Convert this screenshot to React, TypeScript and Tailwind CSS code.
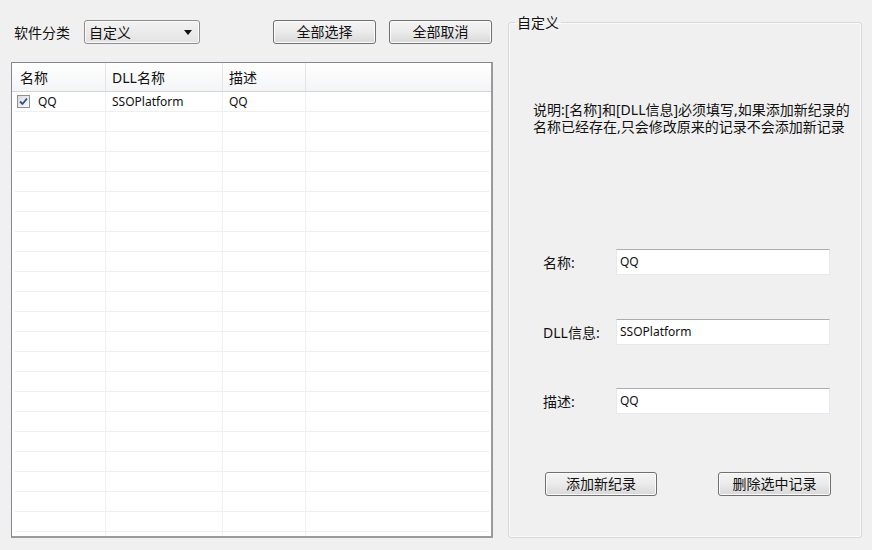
import React from "react";

const FONT = { fontFamily: '"Noto Sans", "Noto Sans CJK SC", sans-serif' };

function WinButton({ label, className = "" }: { label: string; className?: string }) {
  return (
    <button
      className={`h-[24px] rounded-[3px] border border-[#707070] bg-gradient-to-b from-[#f4f4f4] via-[#ebebeb] to-[#d8d8d8] text-[14px] leading-[20px] text-[#111] shadow-[inset_0_0_0_1px_#fcfcfc] ${className}`}
    >
      {label}
    </button>
  );
}

function CheckBox() {
  return (
    <div className="w-[13px] h-[13px] border border-[#8e8f8f] bg-gradient-to-br from-[#dcdcdc] to-[#fbfbfb] flex items-center justify-center">
      <svg width="9" height="9" viewBox="0 0 9 9">
        <path d="M1 4.5 L3.5 7 L8 1.5" fill="none" stroke="#2b4f8f" strokeWidth="1.8" />
      </svg>
    </div>
  );
}

function Field({ label, value, className = "" }: { label: string; value: string; className?: string }) {
  return (
    <div className={`flex items-center ${className}`}>
      <span className="w-[107px] pl-[34px] text-[14px] whitespace-nowrap">{label}</span>
      <div className="w-[214px] h-[26px] bg-white border border-[#e3e9ef] border-t-[#abadb3] flex items-center pl-[3px] text-[12px]">
        {value}
      </div>
    </div>
  );
}

export default function App() {
  const rows = Array.from({ length: 23 }, (_, i) => i);

  return (
    <div className="w-[872px] h-[550px] bg-[#f0f0f0] text-[#111] flex pl-[11px] pt-[14px] overflow-hidden" style={FONT}>
      {/* 左侧：分类 + 列表 */}
      <div className="w-[482px] flex flex-col pt-[6px]">
        <div className="h-[24px] flex items-center">
          <span className="ml-[3px] text-[14px]">软件分类</span>
          <div className="ml-[14px] w-[116px] h-[24px] rounded-[3px] border border-[#8e8e8e] bg-gradient-to-b from-[#f2f2f2] to-[#e3e3e3] flex items-center pl-[4px] pr-[7px] text-[14px] shadow-[inset_0_0_0_1px_#fafafa]">
            <span>自定义</span>
            <svg className="ml-auto" width="8" height="5" viewBox="0 0 8 5">
              <path d="M0 0 H8 L4 5 Z" fill="#111" />
            </svg>
          </div>
          <div className="ml-auto mr-[1px] flex gap-[13px]">
            <WinButton label="全部选择" className="w-[103px]" />
            <WinButton label="全部取消" className="w-[103px]" />
          </div>
        </div>

        <div className="mt-[18px] h-[476px] bg-white border border-[#828790] border-b-2 border-r-2 border-b-[#9a9a9a] border-r-[#9a9a9a] overflow-hidden">
          <div className="h-[29px] flex text-[14px] bg-gradient-to-b from-[#ffffff] to-[#f4f5f7] border-b border-[#d5d5d5]">
            <div className="w-[94px] pl-[8px] flex items-center border-r border-[#e5e5e5]">名称</div>
            <div className="w-[117px] pl-[6px] flex items-center border-r border-[#e5e5e5]">DLL名称</div>
            <div className="w-[83px] pl-[6px] flex items-center border-r border-[#e5e5e5]">描述</div>
            <div className="flex-1" />
          </div>
          <div className="pl-[3px] pr-[2px]">
            {rows.map((i) => (
              <div key={i} className="h-[20px] flex border-b border-[#efefef]">
                <div className="w-[91px] pl-[2px] flex items-center gap-[8px] border-r border-[#f0f0f0] text-[12px]">
                  {i === 0 && (
                    <>
                      <CheckBox />
                      <span>QQ</span>
                    </>
                  )}
                </div>
                <div className="w-[117px] pl-[6px] flex items-center border-r border-[#f0f0f0] text-[12px]">
                  {i === 0 && "SSOPlatform"}
                </div>
                <div className="w-[83px] pl-[6px] flex items-center border-r border-[#f0f0f0] text-[12px]">
                  {i === 0 && "QQ"}
                </div>
                <div className="flex-1" />
              </div>
            ))}
          </div>
        </div>
      </div>

      {/* 右侧：自定义 分组 */}
      <fieldset className="ml-[15px] w-[354px] h-[524px] border border-[#d5d9dd] rounded-[3px] shadow-[inset_0_0_0_1px_#fafafa] flex flex-col">
        <legend className="ml-[6px] px-[2px] text-[14px] leading-[17px]">自定义</legend>
        <div className="mt-[70px] pl-[24px] text-[14px] whitespace-nowrap flex flex-col">
          <span className="leading-[17px]">说明:[名称]和[DLL信息]必须填写,如果添加新纪录的</span>
          <span className="leading-[17px]">名称已经存在,只会修改原来的记录不会添加新记录</span>
        </div>
        <Field label="名称:" value="QQ" className="mt-[114px]" />
        <Field label="DLL信息:" value="SSOPlatform" className="mt-[44px]" />
        <Field label="描述:" value="QQ" className="mt-[43px]" />
        <div className="mt-[58px] flex pl-[36px]">
          <WinButton label="添加新纪录" className="w-[112px]" />
          <WinButton label="删除选中记录" className="ml-[61px] w-[113px]" />
        </div>
      </fieldset>
    </div>
  );
}
